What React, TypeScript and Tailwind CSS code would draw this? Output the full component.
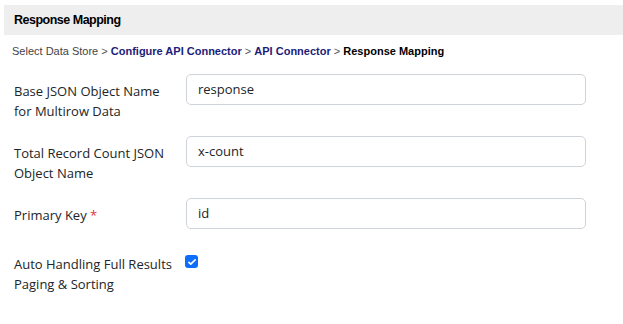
import React from 'react';

const rows = [
  { label: 'Base JSON Object Name for Multirow Data', value: 'response', h: 'h-[62px]' },
  { label: 'Total Record Count JSON Object Name', value: 'x-count', h: 'h-[62px]' },
  { label: 'Primary Key', value: 'id', required: true, h: 'h-[56px]' },
];

const App: React.FC = () => {
  return (
    <div className="w-[623px] h-[324px] bg-white pt-[5px] pl-[4px] font-['Open_Sans',sans-serif] text-[#212529]">
      {/* Header */}
      <div className="h-[30px] bg-[#eeeeee] flex items-center pl-[10px]">
        <h1 className="font-['Liberation_Sans',sans-serif] font-bold text-[12.5px] text-black tracking-[-0.5px]">Response Mapping</h1>
      </div>

      {/* Breadcrumb */}
      <div className="pl-[8px] mt-[8px] font-['Liberation_Sans',sans-serif] text-[11px] text-[#444] leading-[16px]">
        Select Data Store <span className="text-[#555]">&gt;</span>{' '}
        <span className="font-bold text-[#1c1c78]">Configure API Connector</span>{' '}
        <span className="text-[#555]">&gt;</span>{' '}
        <span className="font-bold text-[#1c1c78]">API Connector</span>{' '}
        <span className="text-[#555]">&gt;</span>{' '}
        <span className="font-bold text-black">Response Mapping</span>
      </div>

      {/* Form */}
      <div className="pl-[10px] mt-[15px] flex flex-col">
        {rows.map((r) => (
          <div key={r.label} className={`flex items-start ${r.h}`}>
            <label className="w-[172px] pr-[12px] pt-[7px] text-[13px] leading-[20px]">
              {r.label}
              {r.required && <span className="text-[#dc3545]"> *</span>}
            </label>
            <div className="w-[400px] h-[31px] border border-[#ced4da] rounded-[5px] flex items-center px-[11px] text-[13px]">
              {r.value}
            </div>
          </div>
        ))}
        <div className="flex items-start pt-[1px]">
          <label className="w-[171px] pr-[12px] -mt-[1px] text-[13px] leading-[20px]">
            Auto Handling Full Results Paging &amp; Sorting
          </label>
          <div className="w-[13px] h-[13px] rounded-[3px] bg-[#0d6efd] flex items-center justify-center">
            <svg viewBox="0 0 16 16" className="w-[10px] h-[10px]" fill="none">
              <path d="M3 8.5l3 3 7-7" stroke="white" strokeWidth="2.6" strokeLinecap="round" strokeLinejoin="round" />
            </svg>
          </div>
        </div>
      </div>
    </div>
  );
};

export default App;
